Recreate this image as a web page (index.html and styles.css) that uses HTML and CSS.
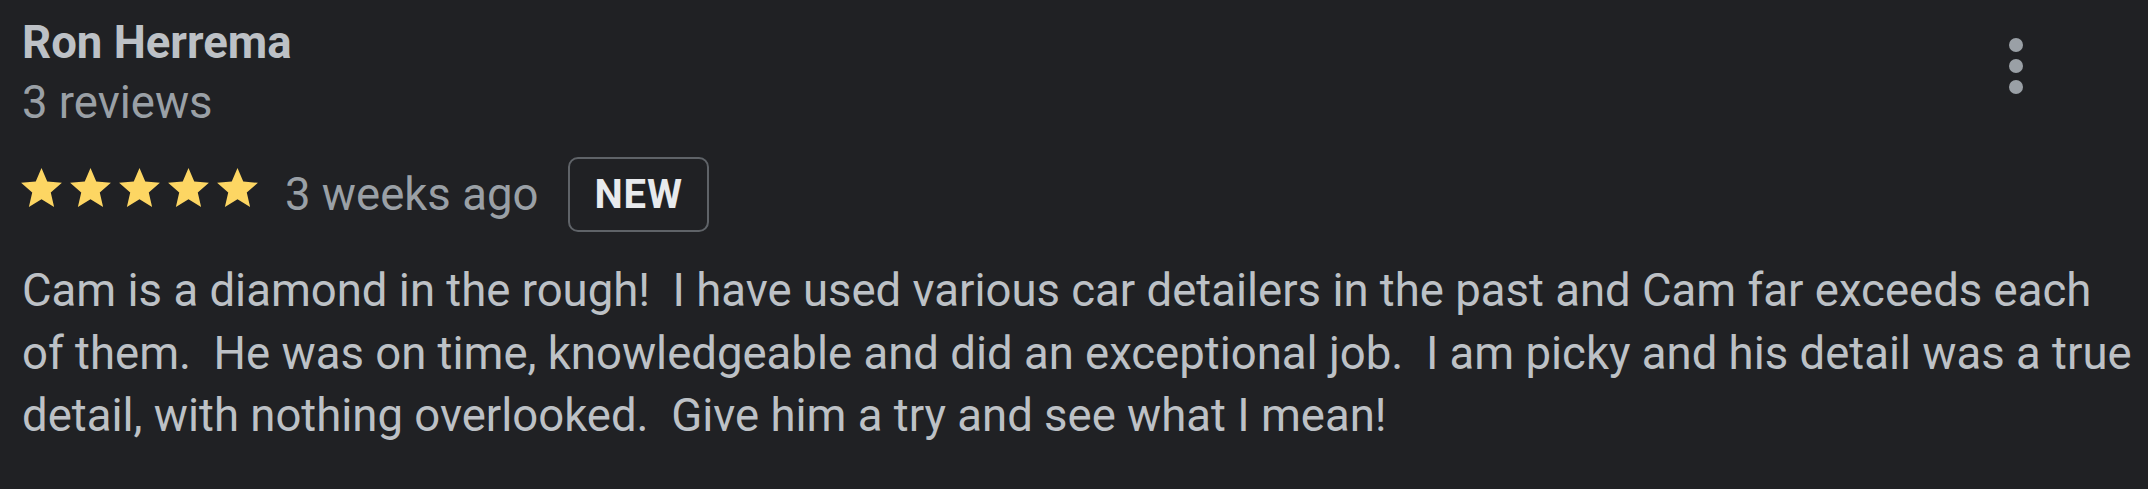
FILE: index.html
```html
<!DOCTYPE html>
<html lang="en">
<head>
<meta charset="utf-8">
<title>Review</title>
<link rel="stylesheet" href="styles.css">
</head>
<body>
<div class="review">
  <div class="review-head">
    <div class="author">
      <div class="author-name">Ron Herrema</div>
      <div class="author-meta">3 reviews</div>
    </div>
    <button class="more-btn" aria-label="More">
      <svg viewBox="0 0 24 24" width="84" height="84"><circle cx="12" cy="6" r="2"/><circle cx="12" cy="12" r="2"/><circle cx="12" cy="18" r="2"/></svg>
    </button>
  </div>
  <div class="rating-row">
    <div class="stars">
      <svg class="star" viewBox="0 0 24 24"><path d="M12 17.27L18.18 21l-1.64-7.03L22 9.24l-7.19-.61L12 2 9.19 8.63 2 9.24l5.46 4.73L5.82 21z"/></svg>
      <svg class="star" viewBox="0 0 24 24"><path d="M12 17.27L18.18 21l-1.64-7.03L22 9.24l-7.19-.61L12 2 9.19 8.63 2 9.24l5.46 4.73L5.82 21z"/></svg>
      <svg class="star" viewBox="0 0 24 24"><path d="M12 17.27L18.18 21l-1.64-7.03L22 9.24l-7.19-.61L12 2 9.19 8.63 2 9.24l5.46 4.73L5.82 21z"/></svg>
      <svg class="star" viewBox="0 0 24 24"><path d="M12 17.27L18.18 21l-1.64-7.03L22 9.24l-7.19-.61L12 2 9.19 8.63 2 9.24l5.46 4.73L5.82 21z"/></svg>
      <svg class="star" viewBox="0 0 24 24"><path d="M12 17.27L18.18 21l-1.64-7.03L22 9.24l-7.19-.61L12 2 9.19 8.63 2 9.24l5.46 4.73L5.82 21z"/></svg>
    </div>
    <span class="date">3 weeks ago</span>
    <span class="badge">NEW</span>
  </div>
  <p class="review-text">Cam is a diamond in the rough!  I have used various car detailers in the past and Cam far exceeds each of them.  He was on time, knowledgeable and did an exceptional job.  I am picky and his detail was a true detail, with nothing overlooked.  Give him a try and see what I mean!</p>
</div>
</body>
</html>
```
FILE: styles.css
```css
html, body {
  margin: 0;
  padding: 0;
  background: #202124;
}
body {
  font-family: Roboto, "Liberation Sans", Arial, sans-serif;
  font-size: 45.5px;
  color: #bdc1c6;
}
.review {
  padding: 13px 15px 0 22px;
}
.review-head {
  display: flex;
  justify-content: space-between;
  align-items: flex-start;
}
.author-name {
  font-weight: 700;
  line-height: 60px;
  color: #bdc1c6;
}
.author-meta {
  line-height: 60px;
  color: #9aa0a6;
}
.more-btn {
  background: none;
  border: 0;
  padding: 0;
  margin: 11px 75px 0 0;
  width: 84px;
  height: 84px;
  display: flex;
  fill: #9aa0a6;
}
.rating-row {
  display: flex;
  align-items: center;
  margin-top: 24px;
  height: 75px;
}
.stars {
  display: flex;
  margin-left: -5px;
  align-self: flex-start;
  margin-top: 7px;
}
.star {
  width: 49px;
  height: 49px;
  fill: #fdd663;
}
.date {
  color: #9aa0a6;
  margin-left: 23px;
  line-height: 54px;
}
.badge {
  margin-left: 30px;
  box-sizing: border-box;
  height: 75px;
  padding: 12px 24px;
  border: 2px solid #5f6368;
  border-radius: 10px;
  font-size: 40px;
  font-weight: 700;
  line-height: 47px;
  letter-spacing: 1px;
  color: #e8eaed;
}
.review-text {
  margin: 28px 0 0;
  line-height: 62.5px;
  white-space: pre-wrap;
  color: #bdc1c6;
}
```
